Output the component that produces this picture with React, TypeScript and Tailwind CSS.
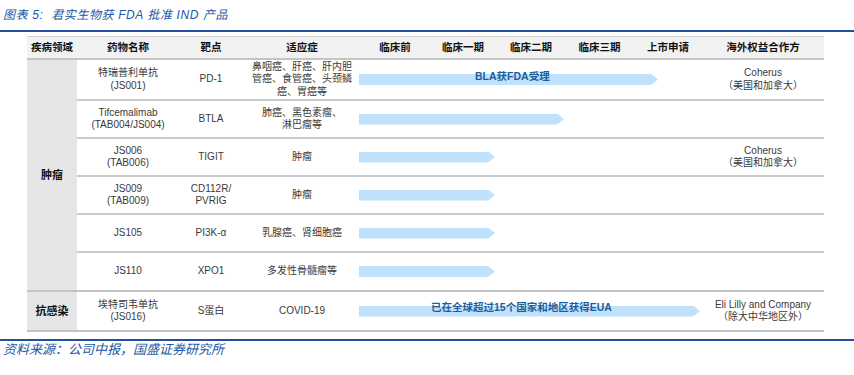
const font = "font-['Liberation_Sans','Noto_Sans_CJK_SC',sans-serif]"

interface Row {
  drug: string[]
  target: string[]
  indication: string[]
  bar: number
  note?: string
  noteLeft?: number
  partner?: string[]
  h: string
}

const tumor: Row[] = [
  {
    drug: ["特瑞普利单抗", "(JS001)"],
    target: ["PD-1"],
    indication: ["鼻咽癌、肝癌、肝内胆", "管癌、食管癌、头颈鳞", "癌、胃癌等"],
    bar: 299,
    note: "BLA获FDA受理",
    noteLeft: 116,
    partner: ["Coherus", "（美国和加拿大）"],
    h: "h-[41px]",
  },
  {
    drug: ["Tifcemalimab", "(TAB004/JS004)"],
    target: ["BTLA"],
    indication: ["肺癌、黑色素瘤、", "淋巴瘤等"],
    bar: 205,
    h: "h-[38px]",
  },
  {
    drug: ["JS006", "(TAB006)"],
    target: ["TIGIT"],
    indication: ["肿瘤"],
    bar: 136,
    partner: ["Coherus", "（美国和加拿大）"],
    h: "h-[38px]",
  },
  {
    drug: ["JS009", "(TAB009)"],
    target: ["CD112R/", "PVRIG"],
    indication: ["肿瘤"],
    bar: 136,
    h: "h-[38px]",
  },
  {
    drug: ["JS105"],
    target: ["PI3K-α"],
    indication: ["乳腺癌、肾细胞癌"],
    bar: 136,
    h: "h-[38px]",
  },
  {
    drug: ["JS110"],
    target: ["XPO1"],
    indication: ["多发性骨髓瘤等"],
    bar: 136,
    h: "h-[37px]",
  },
]

const infection: Row[] = [
  {
    drug: ["埃特司韦单抗", "(JS016)"],
    target: ["S蛋白"],
    indication: ["COVID-19"],
    bar: 341,
    note: "已在全球超过15个国家和地区获得EUA",
    noteLeft: 72,
    partner: ["Eli Lilly and Company", "（除大中华地区外）"],
    h: "h-[38px]",
  },
]

const headers = ["药物名称", "靶点", "适应症", "临床前", "临床一期", "临床二期", "临床三期", "上市申请", "海外权益合作方"]

function Lines({ lines }: { lines: string[] }) {
  return (
    <div className="flex flex-col items-center justify-center text-center leading-[12.5px]">
      {lines.map((l, i) => (
        <span key={i}>{l}</span>
      ))}
    </div>
  )
}

function DataRow({ row, last }: { row: Row; last: boolean }) {
  return (
    <div
      className={`grid grid-cols-[102px_64px_118px_341px_122px] ${row.h} ${last ? "" : "border-b-2 border-[#cbcbcb]"} bg-white`}
    >
      <Lines lines={row.drug} />
      <Lines lines={row.target} />
      <Lines lines={row.indication} />
      <div className="relative flex items-center -ml-[2px]">
        <div
          className="h-[11px] bg-[#bfe1fb] [clip-path:polygon(0_0,calc(100%-7px)_0,100%_50%,calc(100%-7px)_100%,0_100%)]"
          style={{ width: row.bar }}
        />
        {row.note && (
          <span
            className="absolute top-1/2 -translate-y-[11px] whitespace-nowrap text-[10.5px] font-bold text-[#1d5d9b]"
            style={{ left: row.noteLeft }}
          >
            {row.note}
          </span>
        )}
      </div>
      {row.partner ? <Lines lines={row.partner} /> : <div />}
    </div>
  )
}

function Group({ label, rows }: { label: string; rows: Row[] }) {
  return (
    <div className="flex border-b-2 border-[#c4c4c4]">
      <div className="flex w-[50px] items-center justify-center bg-[#e6e6e6] text-[11px] font-bold text-[#111]">
        {label}
      </div>
      <div className="flex flex-col">
        {rows.map((r, i) => (
          <DataRow key={i} row={r} last={i === rows.length - 1} />
        ))}
      </div>
    </div>
  )
}

export default function App() {
  return (
    <div className={`h-[375px] w-[854px] bg-white ${font}`}>
      <div className="flex h-[30px] items-center pl-[3px] text-[12px] italic tracking-[0.6px] text-[#2457a5]">
        图表 5:&nbsp; 君实生物获 FDA 批准 IND 产品
      </div>
      <div className="h-[2px] bg-[#23509e]" />

      <div className="ml-[27px] mt-[4px] w-[797px] text-[10px] text-[#3a3a3a]">
        <div className="grid h-[24px] grid-cols-[50px_102px_64px_118px_68px_68px_68px_69px_68px_122px] items-center border-t border-b-2 border-t-[#cfcfcf] border-b-[#c4c4c4] bg-[#f2f2f2] text-[10.5px] font-bold text-[#111]">
          <span className="text-center">疾病领域</span>
          {headers.map((h) => (
            <span key={h} className="text-center">
              {h}
            </span>
          ))}
        </div>
        <Group label="肿瘤" rows={tumor} />
        <Group label="抗感染" rows={infection} />
      </div>

      <div className="mt-[7px] h-[2px] bg-[#23509e]" />
      <div className="pl-[3px] pt-[1px] text-[13px] italic leading-[16px] text-[#2457a5]">
        资料来源：公司中报，国盛证券研究所
      </div>
    </div>
  )
}
